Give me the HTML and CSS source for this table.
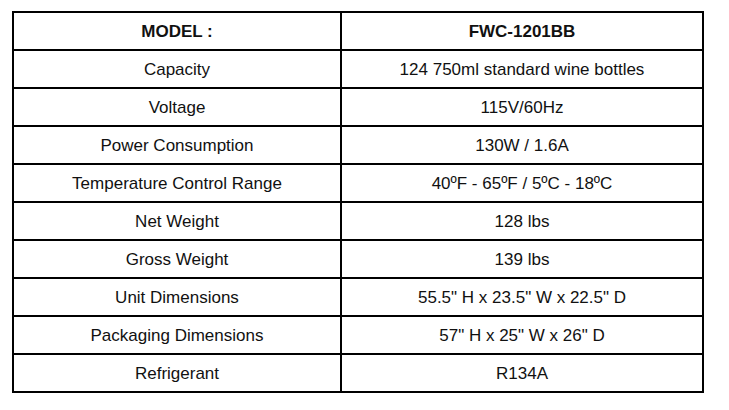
FILE: index.html
```html
<!DOCTYPE html>
<html>
<head>
<meta charset="utf-8">
<link rel="stylesheet" href="styles.css">
</head>
<body>
<div class="page">
<table class="spec">
  <colgroup><col class="c1"><col class="c2"></colgroup>
  <tr class="head"><td>MODEL :</td><td>FWC-1201BB</td></tr>
  <tr><td>Capacity</td><td>124 750ml standard wine bottles</td></tr>
  <tr><td>Voltage</td><td>115V/60Hz</td></tr>
  <tr><td>Power Consumption</td><td>130W / 1.6A</td></tr>
  <tr><td>Temperature Control Range</td><td>40ºF - 65ºF / 5ºC - 18ºC</td></tr>
  <tr><td>Net Weight</td><td>128 lbs</td></tr>
  <tr><td>Gross Weight</td><td>139 lbs</td></tr>
  <tr><td>Unit Dimensions</td><td>55.5" H x 23.5" W x 22.5" D</td></tr>
  <tr><td>Packaging Dimensions</td><td>57" H x 25" W x 26" D</td></tr>
  <tr><td>Refrigerant</td><td>R134A</td></tr>
</table>
</div>
</body>
</html>
```
FILE: styles.css
```css
html, body { margin: 0; padding: 0; background: #fff; }
.page { padding: 11px 0 0 12px; }
.spec {
  border-collapse: collapse;
  width: 692px;
  table-layout: fixed;
  font-family: "Liberation Sans", Arial, sans-serif;
  font-size: 17px;
  color: #111;
}
.c1 { width: 328px; }
.spec td {
  border: 2px solid #000;
  height: 34px;
  padding: 2px 0 0 0;
  text-align: center;
  vertical-align: middle;
}
.head td { font-weight: bold; }
```
